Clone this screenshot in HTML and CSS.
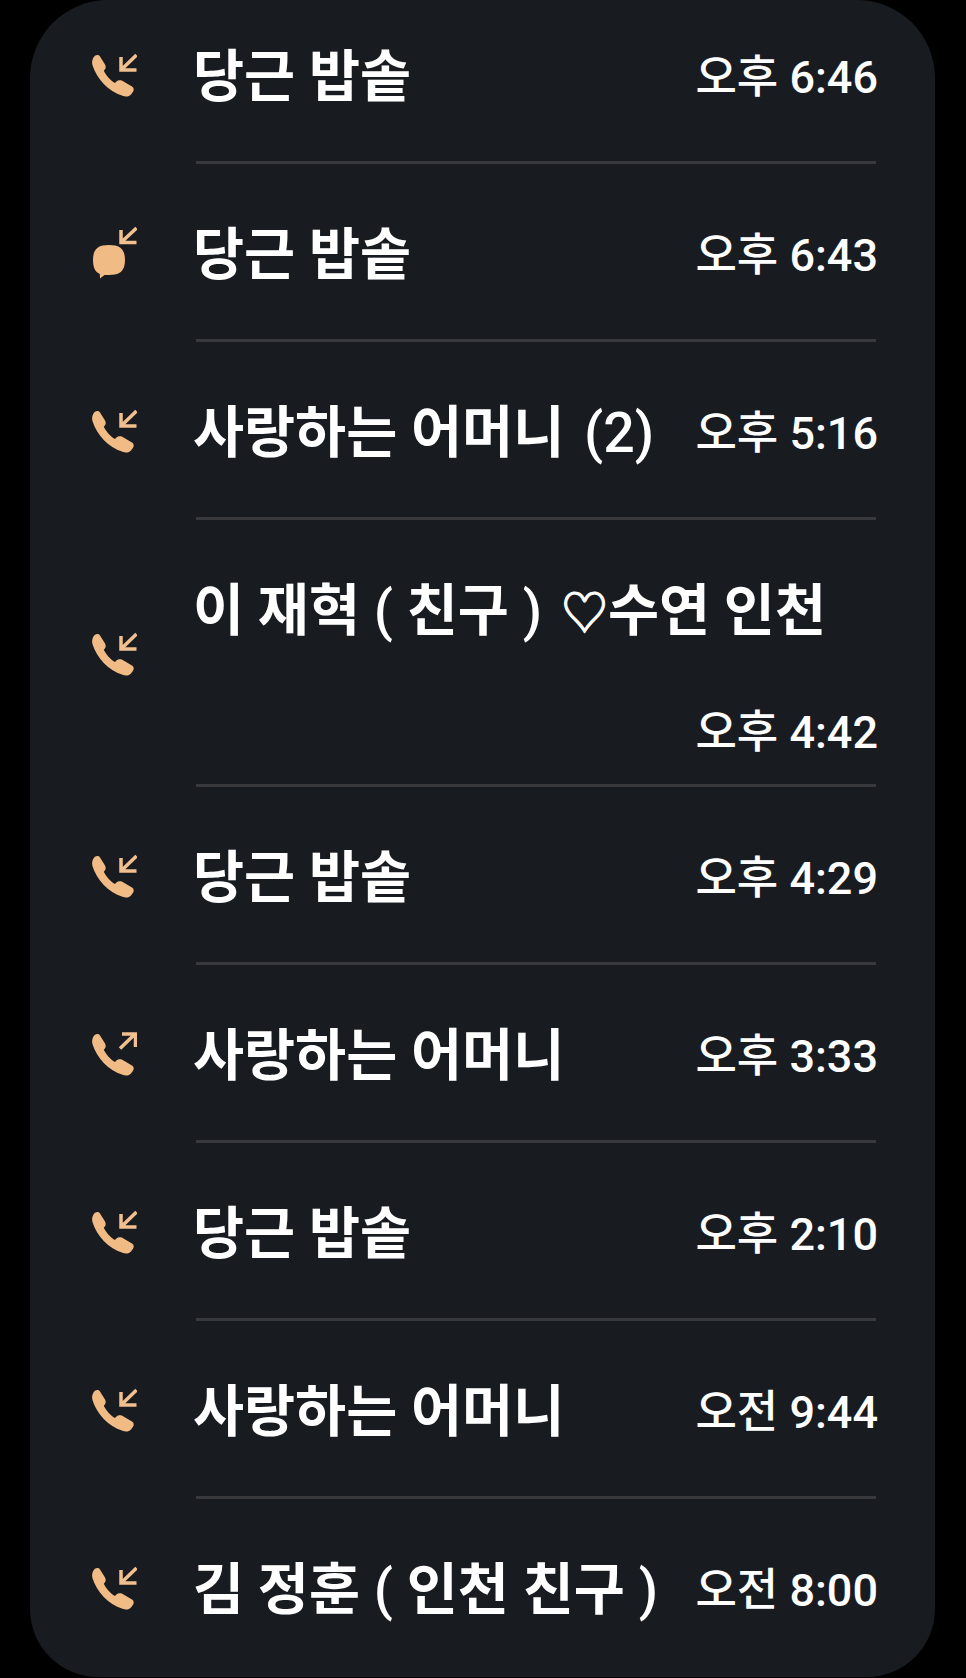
FILE: index.html
```html
<!DOCTYPE html>
<html lang="ko">
<head>
    <meta charset="UTF-8" />
    <title>통화 기록</title>
    <link rel="stylesheet" href="styles.css">
</head>
<body>
    <svg class="icon-defs" aria-hidden="true">
        <symbol id="handset" viewBox="0 -5 46 54">
            <path class="fill" d="M2.200 5C3.600 2 7 1 9 3.400L14 11.500C15.200 13.500 14.800 15.800 13.400 17L12.800 17.800C15 22.500 19.500 27.500 24 30L25.400 28.600C27 27 29 26.800 30.800 27.600L41 33.400C43 34.600 43.200 37 42 38.800L40 41.400C38.400 43.400 35 44 31.500 42.800C17 38 6 26 1.600 12.500C.8 9.800 1 7 2.200 5Z"/>
        </symbol>
        <symbol id="arrow-in" viewBox="0 -5 46 54">
            <path class="line" d="M45.500 2L30 17M30 4V17H45.500"/>
        </symbol>
        <symbol id="arrow-out" viewBox="0 -5 46 54">
            <path class="line" d="M29 16.500L44 2M31 2H44.500V15"/>
        </symbol>
    </svg>

    <main class="panel">
        <ul class="call-list">
            <li class="call">
                <svg class="call-icon"><use href="#handset"/><use href="#arrow-in"/></svg>
                <div class="call-body">
                    <span class="name">당근 밥솥</span>
                    <span class="time">오후 6:46</span>
                </div>
            </li>
            <li class="call">
                <svg class="call-icon" viewBox="0 -5 46 54">
                    <path class="fill" d="M18 14C29 14 34 18 34 29C34 40 29 44 18 44H13.500L9 47.500L8.800 43C4 41 2 36 2 29C2 18 7 14 18 14Z"/>
                    <path class="line" d="M45.500 -3L30 11.500M30 -1V11.500H45.500"/>
                </svg>
                <div class="call-body">
                    <span class="name">당근 밥솥</span>
                    <span class="time">오후 6:43</span>
                </div>
            </li>
            <li class="call">
                <svg class="call-icon"><use href="#handset"/><use href="#arrow-in"/></svg>
                <div class="call-body">
                    <span class="name">사랑하는 어머니 <span class="count">(2)</span></span>
                    <span class="time">오후 5:16</span>
                </div>
            </li>
            <li class="call">
                <svg class="call-icon"><use href="#handset"/><use href="#arrow-in"/></svg>
                <div class="call-body">
                    <span class="name">이 재혁 <span class="paren">(</span> 친구 <span class="paren">)</span> <span class="heart">♡</span>수연 인천</span>
                    <span class="time">오후 4:42</span>
                </div>
            </li>
            <li class="call">
                <svg class="call-icon"><use href="#handset"/><use href="#arrow-in"/></svg>
                <div class="call-body">
                    <span class="name">당근 밥솥</span>
                    <span class="time">오후 4:29</span>
                </div>
            </li>
            <li class="call">
                <svg class="call-icon"><use href="#handset"/><use href="#arrow-out"/></svg>
                <div class="call-body">
                    <span class="name">사랑하는 어머니</span>
                    <span class="time">오후 3:33</span>
                </div>
            </li>
            <li class="call">
                <svg class="call-icon"><use href="#handset"/><use href="#arrow-in"/></svg>
                <div class="call-body">
                    <span class="name">당근 밥솥</span>
                    <span class="time">오후 2:10</span>
                </div>
            </li>
            <li class="call">
                <svg class="call-icon"><use href="#handset"/><use href="#arrow-in"/></svg>
                <div class="call-body">
                    <span class="name">사랑하는 어머니</span>
                    <span class="time">오전 9:44</span>
                </div>
            </li>
            <li class="call">
                <svg class="call-icon"><use href="#handset"/><use href="#arrow-in"/></svg>
                <div class="call-body">
                    <span class="name">김 정훈 <span class="paren">(</span> 인천 친구 <span class="paren">)</span></span>
                    <span class="time">오전 8:00</span>
                </div>
            </li>
        </ul>
    </main>
</body>
</html>
```

FILE: styles.css
```css
body {
    margin: 0;
    background: #000;
    font-family: Roboto, 'Noto Sans CJK KR', sans-serif;
    color: #fff;
}
.icon-defs {
    display: none;
}
.panel {
    width: 905px;
    height: 1677px;
    margin-left: 30px;
    background: #181b20;
    border-radius: 78px 78px 68px 68px;
    overflow: hidden;
}
.call-list {
    list-style: none;
    margin: -14px 0 0 0;
    padding: 0;
}
.call {
    display: flex;
    align-items: center;
    padding-left: 61px;
}
.call-icon {
    flex: none;
    width: 46px;
    height: 54px;
    margin-right: 59px;
}
.fill {
    fill: #f0bb85;
}
.line {
    fill: none;
    stroke: #f2c08e;
    stroke-width: 3.5;
}
.call-body {
    flex: none;
    box-sizing: border-box;
    width: 680px;
    min-height: 178px;
    padding: 59px 0 18px;
    display: flex;
    flex-wrap: wrap;
    align-content: flex-start;
    align-items: center;
    justify-content: space-between;
    row-gap: 53px;
    border-bottom: 3px solid #37393d;
}
.call:last-child .call-body {
    border-bottom: none;
}
.name {
    margin-left: -3px;
    font-size: 55.5px;
    font-weight: 700;
    line-height: 66px;
}
.paren {
    font-weight: 500;
}
.count {
    margin-left: 6px;
    font-weight: 500;
}
.heart {
    margin-left: 5px;
    font-size: 47px;
    -webkit-text-stroke: 1px #fff;
}
.time {
    margin-left: auto;
    margin-right: -2px;
    font-size: 45px;
    font-weight: 500;
    line-height: 66px;
}
```
